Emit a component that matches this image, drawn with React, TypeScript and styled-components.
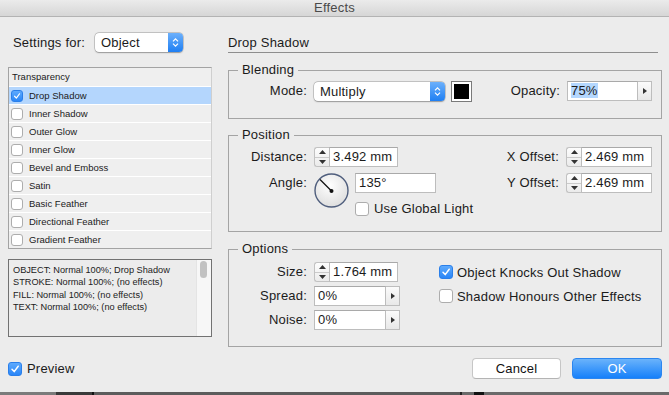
import styled, { createGlobalStyle } from "styled-components";

const GlobalStyle = createGlobalStyle`
  * { box-sizing: border-box; }
  html, body { margin: 0; padding: 0; background: #ececec; }
  body { font-family: "Liberation Sans", Arial, sans-serif; color: #1b1b1b; }
`;

const Window = styled.div`
  width: 669px;
  height: 395px;
  overflow: hidden;
  display: flex;
  flex-direction: column;
  background: #ececec;
  font-size: 13px;
  letter-spacing: 0.2px;
`;

const TitleBar = styled.div`
  flex: none;
  height: 17px;
  line-height: 16px;
  text-align: center;
  color: #4a4a4a;
  background: linear-gradient(#ebebeb, #d6d6d6);
  border-bottom: 1px solid #b3b3b3;
`;

const Main = styled.div`
  display: flex;
  gap: 16px;
  padding: 0 7px 0 8px;
`;

const LeftCol = styled.div`
  width: 204px;
  padding-top: 16px;
  display: flex;
  flex-direction: column;
`;

const RightCol = styled.div`
  width: 434px;
  padding-top: 16px;
`;

const SettingsRow = styled.div`
  height: 19px;
  display: flex;
  align-items: center;
  gap: 10px;
  padding-left: 5px;
`;

const Popup = styled.div<{ $w: number }>`
  width: ${(p) => p.$w}px;
  height: 19px;
  flex: none;
  display: flex;
  background: #fff;
  border-radius: 4px;
  box-shadow: 0 0 0 0.5px rgba(0, 0, 0, 0.28), 0 0.5px 1.5px rgba(0, 0, 0, 0.25);
  overflow: hidden;
`;

const PopupText = styled.span`
  flex: 1;
  padding-left: 6px;
  line-height: 19px;
`;

const PopupArrow = styled.span`
  width: 15px;
  flex: none;
  display: flex;
  align-items: center;
  justify-content: center;
  background: linear-gradient(#6cb0fb, #1f7ff3);
`;

const List = styled.div`
  margin-top: 15px;
  border: 1px solid #a3a3a3;
  border-right-color: #cfcfcf;
  background: #efefef;
  display: flex;
  flex-direction: column;
  letter-spacing: 0;
`;

const ListHeader = styled.div`
  height: 18px;
  line-height: 18px;
  padding-left: 3px;
  font-size: 9.5px;
`;

const ListRow = styled.div<{ $selected?: boolean }>`
  height: 18px;
  border-top: 1px solid #ffffff;
  display: flex;
  align-items: center;
  gap: 6px;
  padding-left: 2px;
  font-size: 9.5px;
  background: ${(p) => (p.$selected ? "#b4d6fd" : "transparent")};
`;

const Desc = styled.div`
  margin-top: 10px;
  height: 78px;
  border: 1px solid #727272;
  display: flex;
  background: #ececec;
  letter-spacing: 0;
`;

const DescText = styled.div`
  flex: 1;
  padding: 4px 0 0 4px;
  font-size: 9.2px;
  line-height: 12.3px;
  color: #222;
`;

const ScrollTrack = styled.div`
  width: 15px;
  background: #f7f7f7;
  border-left: 1px solid #e4e4e4;
  padding: 1px 0 0 3px;
`;

const ScrollThumb = styled.div`
  width: 7px;
  height: 17px;
  border-radius: 4px;
  background: #c2c2c2;
`;

const Heading = styled.div`
  height: 20px;
  line-height: 19px;
  border-bottom: 1px solid #8e8e8e;
  margin-right: 4px;
`;

const Group = styled.fieldset<{ $h: number; $mt: number; $pt: number }>`
  margin: ${(p) => p.$mt}px 0 0;
  padding: ${(p) => p.$pt}px 9px 0 0;
  height: ${(p) => p.$h}px;
  border: 1px solid #a4a4a4;
  min-width: 0;
`;

const Legend = styled.legend`
  margin-left: 9px;
  padding: 0 4px;
  line-height: 16px;
  font-size: 13px;
`;

const Label = styled.span<{ $w?: number }>`
  ${(p) => (p.$w ? `width: ${p.$w}px;` : "")}
  flex: none;
  text-align: right;
  white-space: nowrap;
  line-height: 20px;
`;

const BlendRow = styled.div`
  display: flex;
  align-items: center;
  height: 20px;
`;

const Gap = styled.span<{ $w?: number }>`
  ${(p) => (p.$w ? `width: ${p.$w}px; flex: none;` : "flex: 1;")}
`;

const Swatch = styled.span`
  width: 21px;
  height: 21px;
  flex: none;
  border: 1px solid #7a7a7a;
  padding: 2px;
  background: #fff;
  display: flex;
`;

const SwatchFill = styled.span`
  flex: 1;
  background: #000;
`;

const Combo = styled.div`
  display: flex;
  height: 20px;
  flex: none;
`;

const Field = styled.div<{ $w: number }>`
  width: ${(p) => p.$w}px;
  height: 20px;
  background: #fff;
  border: 1px solid #bdbdbd;
  border-top-color: #a9a9a9;
  padding-left: 3px;
  line-height: 18px;
  font-size: 13px;
  white-space: nowrap;
`;

const Selected = styled.span`
  background: #b4d7fe;
`;

const StepArrow = styled.div`
  width: 14px;
  border: 1px solid #bdbdbd;
  border-left: none;
  background: linear-gradient(#fbfbfb, #e8e8e8);
  display: flex;
  align-items: center;
  justify-content: center;
`;

const Spinner = styled.div`
  width: 15px;
  height: 20px;
  display: flex;
  flex-direction: column;
  border: 1px solid #c2c2c2;
  border-right: none;
  border-radius: 3px 0 0 3px;
  background: linear-gradient(#fdfdfd, #ebebeb);
`;

const SpinHalf = styled.div<{ $down?: boolean }>`
  flex: 1;
  display: flex;
  align-items: center;
  justify-content: center;
  ${(p) => (p.$down ? "border-top: 1px solid #cbcbcb;" : "")}
`;

const PosGrid = styled.div`
  display: grid;
  grid-template-columns: 78px auto 1fr auto auto;
  column-gap: 7px;
  row-gap: 6px;
  align-items: start;
`;

const AngleBlock = styled.div`
  display: flex;
  gap: 6px;
`;

const AngleSide = styled.div`
  display: flex;
  flex-direction: column;
  gap: 8px;
`;

const OptGrid = styled.div`
  display: grid;
  grid-template-columns: 78px 118px 1fr;
  grid-auto-rows: 20px;
  column-gap: 7px;
  row-gap: 4px;
  align-items: center;
`;

const CheckLabel = styled.label<{ $gap: number }>`
  display: flex;
  align-items: center;
  gap: ${(p) => p.$gap}px;
  white-space: nowrap;
`;

const Box = styled.span<{ $on?: boolean; $s: number }>`
  width: ${(p) => p.$s}px;
  height: ${(p) => p.$s}px;
  flex: none;
  border-radius: 3px;
  display: inline-flex;
  align-items: center;
  justify-content: center;
  ${(p) =>
    p.$on
      ? "background: linear-gradient(#5eaafd, #2a86f7); border: 1px solid #2a7fea;"
      : "background: #fff; border: 1px solid #adadad;"}
`;

const Footer = styled.div`
  display: flex;
  align-items: center;
  height: 21px;
  margin-top: 11px;
  padding: 0 7px 0 8px;
`;

const Button = styled.div<{ $primary?: boolean; $w: number }>`
  width: ${(p) => p.$w}px;
  height: 21px;
  line-height: 19px;
  text-align: center;
  border-radius: 4px;
  margin-left: 11px;
  ${(p) =>
    p.$primary
      ? "color: #fff; background: linear-gradient(#6ab3fb, #1680fa); border: 1px solid #2b86f0;"
      : "color: #111; background: #fff; border: 1px solid #c6c6c6; border-bottom-color: #b4b4b4;"}
`;

const BottomStrip = styled.div`
  margin-top: auto;
  height: 3px;
  background: linear-gradient(90deg, #7b7b7b 0 56px, #3a3a3a 56px 92px, #111 92px 94px, #5c5c5c 94px 460px, #222 460px 462px, #6a6a6a 462px 474px, #111 474px 484px, #6a6a6a 484px);
`;

function Check({ on, size }: { on?: boolean; size: number }) {
  return (
    <Box $on={on} $s={size}>
      {on && (
        <svg width={size - 4} height={size - 4} viewBox="0 0 10 10">
          <path d="M2 5.3 L4.2 7.6 L8.2 2.2" fill="none" stroke="#fff" strokeWidth="1.5" strokeLinecap="round" strokeLinejoin="round" />
        </svg>
      )}
    </Box>
  );
}

function Chevrons() {
  return (
    <svg width="7" height="11" viewBox="0 0 7 11">
      <path d="M1 4.3 L3.5 1.8 L6 4.3 M1 6.7 L3.5 9.2 L6 6.7" fill="none" stroke="#fff" strokeWidth="1.2" />
    </svg>
  );
}

function RightTri() {
  return (
    <svg width="4" height="6" viewBox="0 0 4 6">
      <path d="M0 0 L4 3 L0 6 Z" fill="#333" />
    </svg>
  );
}

function SpinField({ value, w }: { value: string; w: number }) {
  return (
    <Combo>
      <Spinner>
        <SpinHalf>
          <svg width="7" height="4" viewBox="0 0 7 4">
            <path d="M0 4 L3.5 0 L7 4 Z" fill="#333" />
          </svg>
        </SpinHalf>
        <SpinHalf $down>
          <svg width="7" height="4" viewBox="0 0 7 4">
            <path d="M0 0 L7 0 L3.5 4 Z" fill="#333" />
          </svg>
        </SpinHalf>
      </Spinner>
      <Field $w={w}>{value}</Field>
    </Combo>
  );
}

function ArrowField({ children, w }: { children: React.ReactNode; w: number }) {
  return (
    <Combo>
      <Field $w={w}>{children}</Field>
      <StepArrow>
        <RightTri />
      </StepArrow>
    </Combo>
  );
}

function Dial() {
  return (
    <svg width="35" height="35" viewBox="0 0 35 35">
      <defs>
        <radialGradient id="dialFill" cx="0.45" cy="0.35" r="0.7">
          <stop offset="0" stopColor="#ffffff" />
          <stop offset="1" stopColor="#dcdcdc" />
        </radialGradient>
      </defs>
      <circle cx="17.5" cy="17.5" r="16.5" fill="url(#dialFill)" stroke="#4f5e7d" strokeWidth="1.4" />
      <line x1="17.5" y1="18" x2="6" y2="6.5" stroke="#111" strokeWidth="1.2" />
      <circle cx="17.5" cy="18" r="2" fill="#111" />
    </svg>
  );
}

const effects = [
  "Drop Shadow",
  "Inner Shadow",
  "Outer Glow",
  "Inner Glow",
  "Bevel and Emboss",
  "Satin",
  "Basic Feather",
  "Directional Feather",
  "Gradient Feather",
];

export default function App() {
  return (
    <Window>
      <GlobalStyle />
      <TitleBar>Effects</TitleBar>
      <Main>
        <LeftCol>
          <SettingsRow>
            <span>Settings for:</span>
            <Popup $w={88}>
              <PopupText>Object</PopupText>
              <PopupArrow>
                <Chevrons />
              </PopupArrow>
            </Popup>
          </SettingsRow>
          <List>
            <ListHeader>Transparency</ListHeader>
            {effects.map((name, i) => (
              <ListRow key={name} $selected={i === 0}>
                <Check on={i === 0} size={12} />
                {name}
              </ListRow>
            ))}
          </List>
          <Desc>
            <DescText>
              OBJECT: Normal 100%; Drop Shadow
              <br />
              STROKE: Normal 100%; (no effects)
              <br />
              FILL: Normal 100%; (no effects)
              <br />
              TEXT: Normal 100%; (no effects)
            </DescText>
            <ScrollTrack>
              <ScrollThumb />
            </ScrollTrack>
          </Desc>
        </LeftCol>

        <RightCol>
          <Heading>Drop Shadow</Heading>

          <Group $mt={9} $h={57} $pt={3}>
            <Legend>Blending</Legend>
            <BlendRow>
              <Label $w={78}>Mode:</Label>
              <Gap $w={7} />
              <Popup $w={131}>
                <PopupText>Multiply</PopupText>
                <PopupArrow>
                  <Chevrons />
                </PopupArrow>
              </Popup>
              <Gap $w={6} />
              <Swatch>
                <SwatchFill />
              </Swatch>
              <Gap />
              <Label>Opacity:</Label>
              <Gap $w={7} />
              <ArrowField w={71}>
                <Selected>75%</Selected>
              </ArrowField>
            </BlendRow>
          </Group>

          <Group $mt={8} $h={105} $pt={4}>
            <Legend>Position</Legend>
            <PosGrid>
              <Label>Distance:</Label>
              <SpinField value="3.492 mm" w={69} />
              <span />
              <Label>X Offset:</Label>
              <SpinField value="2.469 mm" w={71} />

              <Label>Angle:</Label>
              <AngleBlock>
                <Dial />
                <AngleSide>
                  <Field $w={81}>135°</Field>
                  <CheckLabel $gap={5}>
                    <Check size={14} />
                    Use Global Light
                  </CheckLabel>
                </AngleSide>
              </AngleBlock>
              <span />
              <Label>Y Offset:</Label>
              <SpinField value="2.469 mm" w={71} />
            </PosGrid>
          </Group>

          <Group $mt={9} $h={106} $pt={5}>
            <Legend>Options</Legend>
            <OptGrid>
              <Label>Size:</Label>
              <SpinField value="1.764 mm" w={69} />
              <CheckLabel $gap={4}>
                <Check on size={14} />
                Object Knocks Out Shadow
              </CheckLabel>

              <Label>Spread:</Label>
              <ArrowField w={72}>0%</ArrowField>
              <CheckLabel $gap={4}>
                <Check size={14} />
                Shadow Honours Other Effects
              </CheckLabel>

              <Label>Noise:</Label>
              <ArrowField w={72}>0%</ArrowField>
              <span />
            </OptGrid>
          </Group>
        </RightCol>
      </Main>

      <Footer>
        <CheckLabel $gap={5}>
          <Check on size={14} />
          Preview
        </CheckLabel>
        <Gap />
        <Button $w={89}>Cancel</Button>
        <Button $primary $w={90}>
          OK
        </Button>
      </Footer>
      <BottomStrip />
    </Window>
  );
}
